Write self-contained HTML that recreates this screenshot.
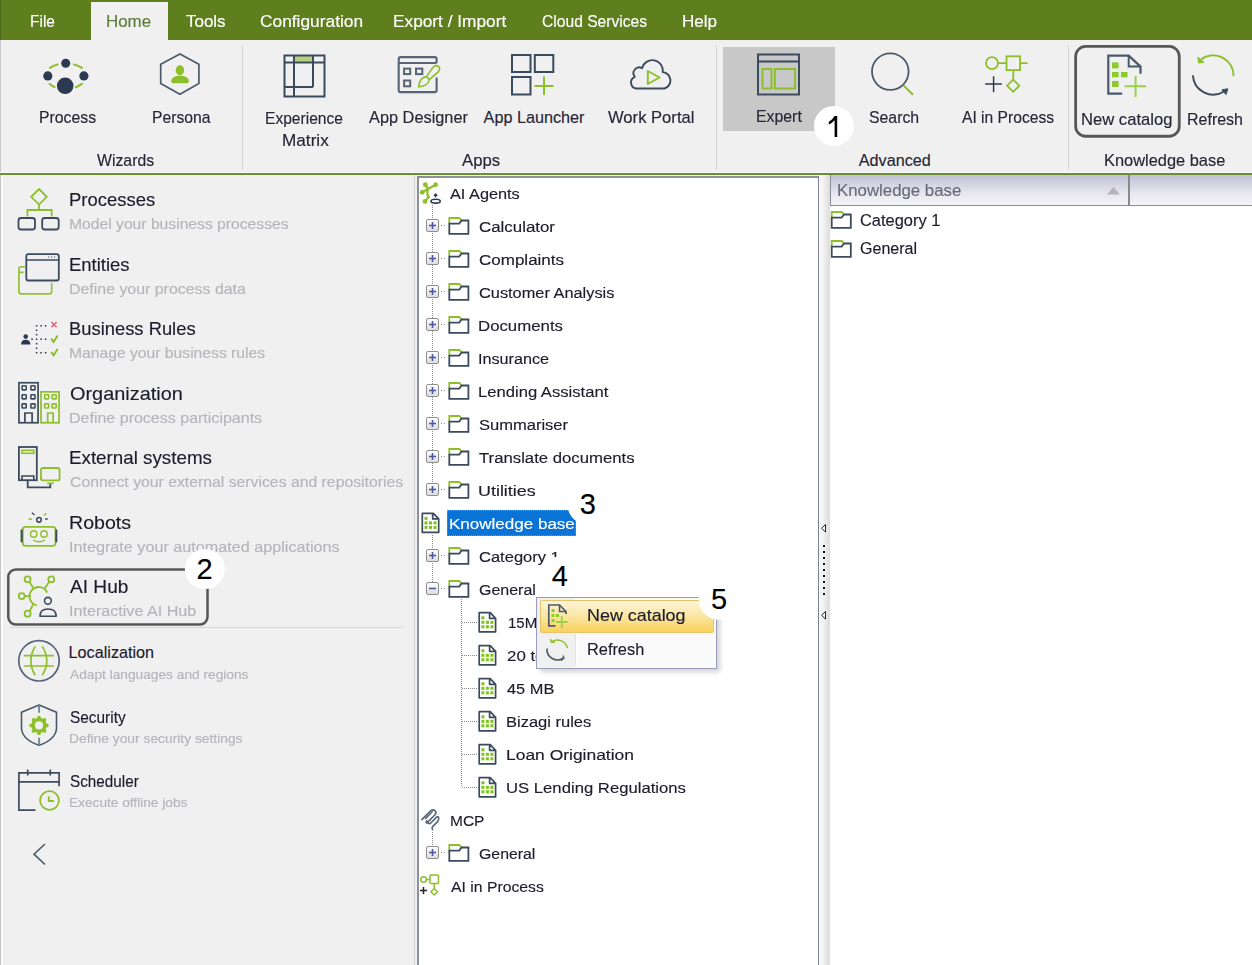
<!DOCTYPE html>
<html><head><meta charset="utf-8"><style>
*{margin:0;padding:0;box-sizing:border-box}
html,body{width:1252px;height:965px;overflow:hidden;background:#f0f0f0;font-family:'Liberation Sans',sans-serif}
.a{position:absolute}
.t{position:absolute;white-space:pre;transform-origin:0 0;-webkit-text-stroke:0.15px currentColor}
svg{position:absolute;left:0;top:0}
</style></head><body>

<div class="a" style="left:0;top:0;width:1252px;height:40px;background:#5f7f1f"></div>
<div class="a" style="left:0;top:0;width:1px;height:40px;background:#4a6a18"></div>
<div class="a" style="left:91px;top:2px;width:77px;height:38px;background:#f0f0f0"></div>
<div class="a" style="left:0;top:40px;width:1px;height:135px;background:#c8c8c8"></div>
<div class="a" style="left:242px;top:45px;width:1px;height:125px;background:#d4d4d4"></div>
<div class="a" style="left:716px;top:45px;width:1px;height:125px;background:#d4d4d4"></div>
<div class="a" style="left:1068px;top:45px;width:1px;height:125px;background:#d4d4d4"></div>
<div class="a" style="left:0;top:172px;width:1252px;height:1px;background:#fafafa"></div>
<div class="a" style="left:0;top:173px;width:1252px;height:2px;background:#6a8f2e"></div>
<!-- left panel -->
<div class="a" style="left:0;top:175px;width:1px;height:790px;background:#c4c4c4"></div>
<div class="a" style="left:1px;top:175px;width:2px;height:790px;background:#fcfcfc"></div>
<div class="a" style="left:414px;top:175px;width:1px;height:790px;background:#d2d2d2"></div>
<div class="a" style="left:415px;top:175px;width:2px;height:790px;background:#eef0f2"></div>
<!-- tree panel -->
<div class="a" style="left:417px;top:176px;width:402px;height:789px;background:#fff;border-left:2px solid #8c909a;border-top:2px solid #8c909a;border-right:1px solid #7c8298"></div>
<!-- splitter -->
<div class="a" style="left:819px;top:175px;width:11px;height:790px;background:linear-gradient(to right,#fafafa,#f2f2f2 40%,#dcdcdc)"></div>
<!-- right panel -->
<div class="a" style="left:830px;top:175px;width:422px;height:790px;background:#fff"></div>
<div class="a" style="left:830px;top:175px;width:422px;height:31px;background:linear-gradient(to bottom,#c0c0d6,#e6e6ee 60%,#f4f4f8);border-bottom:1px solid #8e8e8e"></div>
<div class="a" style="left:1128px;top:175px;width:2px;height:30px;background:#8a8a8a"></div>
<div class="a" style="left:830px;top:175px;width:1px;height:31px;background:#8a8e9a"></div>
<!-- expert highlight -->
<div class="a" style="left:723px;top:47px;width:112px;height:84px;background:#c8c8c8"></div>
<!-- selection -->
<div class="a" style="left:447px;top:510px;width:129px;height:26px;background:#0a74d6;border:1px dotted #e07a20"></div>


<svg width="1252" height="965" viewBox="0 0 1252 965">
<g id="process">
 <circle cx="65.7" cy="63.2" r="4.5" fill="#2b3a50"/>
 <circle cx="47.8" cy="75.9" r="4.6" fill="#2b3a50"/>
 <circle cx="83.9" cy="75.9" r="4.6" fill="#2b3a50"/>
 <circle cx="65.2" cy="85.8" r="8.3" fill="#2b3a50"/>
 <g stroke="#8dbf2b" stroke-width="2" fill="none" stroke-linecap="round">
  <path d="M49.9 67.9 Q53 65.5 57.7 64.5"/><path d="M74 64.5 Q78 65.5 82 67.9"/>
  <path d="M49.7 83.9 Q52 86 54.6 87"/><path d="M75.8 87.3 Q79 86 82 83.9"/>
 </g>
</g>
<g id="persona">
 <path d="M179.9 53.9 L198.9 64.2 L198.9 83.6 L179.9 94.3 L160.7 83.6 L160.7 64.2 Z" fill="none" stroke="#4c5a6a" stroke-width="1.7" stroke-linejoin="round"/>
 <ellipse cx="179.9" cy="70.3" rx="4.2" ry="5" fill="#8dbf2b"/>
 <path d="M171.2 81 Q171.5 76 179.9 75.5 Q188.6 76 188.9 81 Q188.9 83.3 186 83.3 L174 83.3 Q171.2 83.3 171.2 81Z" fill="#8dbf2b"/>
</g>
<g id="expmatrix" fill="none" stroke="#3b4a5c" stroke-width="2">
 <rect x="294" y="56" width="19" height="6" fill="#b5d07a" stroke="none"/>
 <rect x="284.5" y="55.5" width="40" height="41"/>
 <path d="M284.5 62.5 H324.5 M294 55.5 V96.5 M313 55.5 V87 M284.5 87 H313"/>
</g>
<g id="appdesigner" fill="none" stroke="#566474" stroke-width="2.1">
 <path d="M436.6 63 V59 Q436.6 57.1 434.7 57.1 H400.6 Q398.7 57.1 398.7 59 V90.2 Q398.7 92.1 400.6 92.1 H434.7 Q436.6 92.1 436.6 90.2 V77.5"/>
 <path d="M398.7 63 H436.6"/>
 <g stroke-width="2"><rect x="404.1" y="68.6" width="6.1" height="5.5"/><rect x="416" y="68.6" width="6.3" height="5.5"/><rect x="404.1" y="80.5" width="6.1" height="5.8"/></g>
 <path d="M433.5 66.8 Q436.5 64.5 438.8 66.8 Q440.8 69.3 438.2 71.8 L429.4 79.6 L426.4 76.6 Z M426.4 76.6 Q421 77.6 419.6 82.5 L418.6 87 L423 86 Q428 84.8 429.4 79.6" stroke="#8dbf2b" stroke-width="1.6" stroke-linejoin="round"/>
</g>
<g id="applauncher" fill="none" stroke="#3b4a5c" stroke-width="2">
 <rect x="512" y="55" width="18.5" height="17"/>
 <rect x="534.8" y="55" width="18.5" height="17"/>
 <rect x="512" y="77" width="18.5" height="17.5"/>
 <path d="M534.5 86 H553.5 M544 76.5 V95" stroke="#8dbf2b"/>
</g>
<g id="workportal" fill="none" stroke="#3e4c5e" stroke-width="1.9">
 <path d="M636.5 88.5 A6.1 6.1 0 0 1 634.8 76.8 A5.7 5.7 0 0 1 642 68.2 A10.6 10.6 0 0 1 662.8 72.1 A8.4 8.4 0 0 1 664.5 88.5 Z" stroke-linejoin="round"/>
 <path d="M647.8 71 L659.5 77.5 L647.8 84 Z" stroke="#8dbf2b" stroke-width="1.9" stroke-linejoin="round"/>
</g>
<g id="expert" fill="none" stroke="#3b4a5c" stroke-width="2">
 <rect x="758" y="54.5" width="41" height="40"/>
 <path d="M758 61.5 H799"/>
 <rect x="762.5" y="69" width="9" height="19.5" stroke="#8dbf2b"/>
 <rect x="774.8" y="69" width="20.3" height="19.5" stroke="#8dbf2b"/>
</g>
<g id="search" fill="none">
 <circle cx="890.3" cy="71.6" r="18.3" stroke="#4c5a6a" stroke-width="1.8"/>
 <path d="M903.3 85.3 L913 94.8" stroke="#8dbf2b" stroke-width="2"/>
</g>
<g id="aiproc" fill="none" stroke="#8dbf2b" stroke-width="1.8">
 <circle cx="992" cy="63.2" r="6"/>
 <path d="M998 63.2 H1006 M1020.7 63.2 H1027.7 M1013.3 70.6 V79.5"/>
 <rect x="1006.5" y="56.3" width="13.6" height="13.8"/>
 <path d="M1013.2 79.6 L1019.3 85.7 L1013.2 91.8 L1007.1 85.7Z"/>
 <path d="M985.1 84.1 H1001.8 M993.6 76.3 V92.2" stroke="#2b3a50" stroke-width="1.5"/>
</g>
<g id="newcat">
 <path d="M1122.2 93.6 H1108.3 V55.6 H1128.7 L1140.5 66.6 V73.7" fill="none" stroke="#4a5a6e" stroke-width="2.2"/>
 <path d="M1128.7 55.6 V66.6 H1140.5" fill="none" stroke="#4a5a6e" stroke-width="2"/>
 <g fill="#8ccc2a"><rect x="1112" y="62.4" width="6.6" height="6"/><rect x="1112" y="72" width="6.6" height="5.3"/><rect x="1121" y="72" width="6.5" height="5.3"/><rect x="1112" y="81" width="6.6" height="6"/></g>
 <path d="M1124.6 86.3 H1146.1 M1135.6 76.1 V97.1" stroke="#9ad04a" stroke-width="2"/>
</g>
<g id="refresh" fill="none" stroke-width="1.9">
 <path d="M1233.6 76.2 A20.3 20.3 0 0 0 1201 59.5" stroke="#8dbf2b"/>
 <path d="M1197.8 57.2 L1198.6 63 L1204 62.3 Z" fill="#8dbf2b" stroke="#8dbf2b" stroke-width="1" stroke-linejoin="round"/>
 <path d="M1192.9 75.4 A20.3 20.3 0 0 0 1224 91.5" stroke="#3e4c5e"/>
 <path d="M1222 89.8 L1227.8 88.8 L1226 94.6 Z" fill="#3e4c5e" stroke="#3e4c5e" stroke-width="1" stroke-linejoin="round"/>
</g>
<rect x="1075.65" y="46.45" width="103.6" height="89.8" rx="10" fill="none" stroke="#575757" stroke-width="2.8"/>
</svg>


<svg width="1252" height="965" viewBox="0 0 1252 965">
<g id="l-processes" fill="none" stroke-width="1.8">
 <path d="M39 189 L46.8 196.8 L39 204.6 L31.2 196.8Z M39 204.6 V210 M27.4 216.5 V210 H51.7 V216.5" stroke="#8dbf2b"/>
 <rect x="18.5" y="218" width="16.5" height="11.5" rx="2.5" stroke="#3b4a5c"/>
 <rect x="42.2" y="218" width="16.5" height="11.5" rx="2.5" stroke="#3b4a5c"/>
</g>
<g id="l-entities" fill="none" stroke-width="1.7">
 <path d="M24.8 266.8 H21 Q18.9 266.8 18.9 269 V291.6 Q18.9 293.9 21 293.9 H49.6 Q51.7 293.9 51.7 291.6 V282.9 M18.9 272.4 H23.5" stroke="#96c03a"/>
 <rect x="26.3" y="254.2" width="32.5" height="26.3" rx="2" stroke="#3b4a5c" stroke-width="1.8"/>
 <path d="M26.3 260 H58.8" stroke="#3b4a5c" stroke-width="1.5"/>
 <path d="M48 257 h1.2 M51 257 h1.2 M54 257 h1.2" stroke="#3b4a5c" stroke-width="1"/>
</g>
<g id="l-brules">
 <circle cx="25.7" cy="336.6" r="2.3" fill="#2b3a50"/><path d="M21 344.5 Q21 340 25.7 339.8 Q30.4 340 30.4 344.5Z" fill="#2b3a50"/>
 <rect x="35.85" y="325.05" width="1.5" height="1.5" fill="#2a3646"/><rect x="40.35" y="325.05" width="1.5" height="1.5" fill="#2a3646"/><rect x="44.85" y="325.05" width="1.5" height="1.5" fill="#2a3646"/><rect x="31.35" y="338.45" width="1.5" height="1.5" fill="#2a3646"/><rect x="35.85" y="338.45" width="1.5" height="1.5" fill="#2a3646"/><rect x="40.35" y="338.45" width="1.5" height="1.5" fill="#2a3646"/><rect x="44.85" y="338.45" width="1.5" height="1.5" fill="#2a3646"/><rect x="35.85" y="351.95" width="1.5" height="1.5" fill="#2a3646"/><rect x="40.35" y="351.95" width="1.5" height="1.5" fill="#2a3646"/><rect x="44.85" y="351.95" width="1.5" height="1.5" fill="#2a3646"/><rect x="35.85" y="329.55" width="1.5" height="1.5" fill="#2a3646"/><rect x="35.85" y="333.95" width="1.5" height="1.5" fill="#2a3646"/><rect x="35.85" y="342.95" width="1.5" height="1.5" fill="#2a3646"/><rect x="35.85" y="347.45" width="1.5" height="1.5" fill="#2a3646"/>
 <path d="M51.4 322 L56.6 327.2 M56.6 322 L51.4 327.2" stroke="#e86078" stroke-width="1.6"/>
 <path d="M51.2 338.6 L53.6 342 L57.6 335.6 M51.2 352 L53.6 355.4 L57.6 349" stroke="#8cb82a" stroke-width="1.9" fill="none"/>
</g>
<g id="l-org" fill="none" stroke-width="1.7">
 <rect x="18.95" y="382.75" width="19.1" height="40" stroke="#3b4a5c"/>
 <g stroke="#3b4a5c" stroke-width="1.6"><rect x="22.1" y="385.8" width="4.1" height="4.1" rx="0.6"/><rect x="22.1" y="394.8" width="4.1" height="4.1" rx="0.6"/><rect x="22.1" y="403.9" width="4.1" height="4.1" rx="0.6"/><rect x="30.9" y="385.8" width="4.1" height="4.1" rx="0.6"/><rect x="30.9" y="394.8" width="4.1" height="4.1" rx="0.6"/><rect x="30.9" y="403.9" width="4.1" height="4.1" rx="0.6"/></g>
 <path d="M24.9 422.8 V413 H32.1 V422.8" stroke="#3b4a5c"/>
 <rect x="41.05" y="391.85" width="18" height="30.9" stroke="#8dbf2b"/>
 <g stroke="#8dbf2b" stroke-width="1.6"><rect x="44.6" y="394.8" width="4.1" height="4.1" rx="0.6"/><rect x="44.6" y="403.9" width="4.1" height="4.1" rx="0.6"/><rect x="52.1" y="394.8" width="4.1" height="4.1" rx="0.6"/><rect x="52.1" y="403.9" width="4.1" height="4.1" rx="0.6"/></g>
 <path d="M47.7 422.8 V413 H53.1 V422.8" stroke="#8dbf2b"/>
</g>
<g id="l-ext" fill="none" stroke-width="1.8">
 <rect x="18.9" y="447" width="17.9" height="33.2" stroke="#3b4a5c"/>
 <rect x="22" y="450.3" width="11.8" height="3" stroke="#8dbf2b" stroke-width="1.6"/>
 <path d="M22 480.2 V476 H33.8 V480.2" stroke="#3b4a5c" stroke-width="1.6"/>
 <path d="M27.7 480.2 V487.4 H50.3 V483.3" stroke="#3b4a5c"/>
 <path d="M47.2 483.3 H53.6" stroke="#8dbf2b"/>
 <rect x="41" y="468" width="18.6" height="12.4" rx="2" stroke="#8dbf2b"/>
</g>
<g id="l-robots" fill="none" stroke-width="1.8">
 <rect x="22.8" y="526.8" width="32.7" height="19" rx="2.8" stroke="#8dbf2b"/>
 <path d="M21.6 529.4 V542.3 M56.3 529.4 V542.3" stroke="#3b4a5c" stroke-width="2"/>
 <circle cx="33.7" cy="534" r="3.2" stroke="#8dbf2b" stroke-width="1.4"/><circle cx="44" cy="534" r="3.2" stroke="#8dbf2b" stroke-width="1.4"/>
 <path d="M33.2 540 Q39 543.5 45.1 540" stroke="#8dbf2b" stroke-width="1.4"/>
 <circle cx="39" cy="519.8" r="2.3" stroke="#3b4a5c" stroke-width="1.6"/>
 <path d="M28.5 519 H32.1 M43.8 515.6 L46.4 513.3" stroke="#8dbf2b" stroke-width="1.3"/>
 <path d="M45.1 519 H47.7 M31.9 512.8 L34.5 515.1" stroke="#3b4a5c" stroke-width="1.3"/>
</g>
<g id="l-aihub" fill="none" stroke-width="1.8">
 <g stroke="#8dbf2b">
 <circle cx="27.6" cy="579.3" r="3"/><circle cx="51.3" cy="579.3" r="3"/><circle cx="21.7" cy="596.1" r="3"/><circle cx="27.6" cy="613.7" r="3"/>
 <path d="M47.2 592.7 A9.2 9.2 0 1 0 36.8 605.2"/>
 <path d="M29.5 581.8 L33 587.8 M49.3 581.8 L44.6 588.6 M24.7 596.1 H31.1 M29.6 611.3 L33.2 604.1"/>
 </g>
 <circle cx="47.9" cy="600.8" r="3.4" stroke="#3b4a5c" stroke-width="1.6"/>
 <path d="M40 616.2 Q40 609 48 609 Q56.2 609 56.2 616.2 Z" stroke="#3b4a5c" stroke-width="1.6" stroke-linejoin="round"/>
</g>
<g id="l-loc" fill="none" stroke-width="1.7">
 <circle cx="39" cy="660.8" r="20.2" stroke="#56647a"/>
 <path d="M23.8 655.7 H53.9 M23.8 666 H53.9 M35.2 646.4 Q26.5 661 35.2 675.4 M42.2 646.4 Q51.5 661 42.2 675.4" stroke="#8dbf2b"/>
</g>
<g id="l-sec" fill="none" stroke-width="1.6">
 <path d="M39.1 705 L56.5 712.2 V729 Q55 740 39.1 745.3 Q23 740 21.5 729 V712.2 Z" stroke="#4a5868" stroke-linejoin="round"/>
 <path d="M39.1 705.5 V712.7 M39.1 737.8 V745" stroke="#7a8898" stroke-width="2"/>
 <circle cx="39" cy="725.4" r="5.9" stroke="#8dbf2b" stroke-width="3.6"/>
 <g fill="#8dbf2b" stroke="none"><circle cx="39" cy="717.6" r="1.9"/><circle cx="39" cy="733.2" r="1.9"/><circle cx="31.2" cy="725.4" r="1.9"/><circle cx="46.8" cy="725.4" r="1.9"/><circle cx="33.5" cy="719.9" r="1.9"/><circle cx="44.5" cy="719.9" r="1.9"/><circle cx="33.5" cy="730.9" r="1.9"/><circle cx="44.5" cy="730.9" r="1.9"/></g>
</g>
<g id="l-sched" fill="none" stroke-width="1.7">
 <path d="M35.5 810.1 H18.9 V772.8 H59.1 V786.2 M18.9 781.8 H59.1 M27.7 769.4 V775.6 M50.3 769.4 V775.6" stroke="#3e4c5e"/>
 <circle cx="49.5" cy="800.5" r="9.4" stroke="#8dbf2b" stroke-width="1.8"/>
 <path d="M48.7 796.3 V801 H53.9" stroke="#8dbf2b" stroke-width="1.8"/>
</g>
<path d="M45 844 L34 854.2 L45 864.5" fill="none" stroke="#4c5a6a" stroke-width="1.6"/>
<rect x="8.3" y="569.5" width="199.2" height="55" rx="7.5" fill="none" stroke="#575757" stroke-width="2.5"/>
<path d="M10 627.5 H403" stroke="#d6d6d6" stroke-width="1"/>
</svg>

<svg width="1252" height="965" viewBox="0 0 1252 965">
<defs><linearGradient id="eg" x1="0" y1="0" x2="0" y2="1"><stop offset="0" stop-color="#ffffff"/><stop offset="1" stop-color="#dcdcdc"/></linearGradient></defs>
<g stroke="#8dbf2b" stroke-width="2.2" fill="none"><path d="M425.3 184.7 L428 189 L435.6 184.7 M428 189 L422.2 192.3 M428 189 Q426.5 194 428.5 197 L425 201.4"/></g>
<g fill="#8dbf2b"><circle cx="425.3" cy="184.7" r="2.4"/><circle cx="435.6" cy="184.7" r="2.4"/><circle cx="422.2" cy="192.3" r="2.4"/><circle cx="425" cy="201.4" r="2.4"/><circle cx="428.5" cy="197" r="1.6"/></g>
<path d="M435.6 193 L437.6 195.2 L435.6 197.4 L433.6 195.2Z" fill="#2b3a50"/><ellipse cx="435.6" cy="201.2" rx="4.6" ry="1.9" fill="none" stroke="#2b3a50" stroke-width="1.6"/>
<path d="M432.5 205 V490" stroke="#8a8a8a" stroke-width="1" stroke-dasharray="1 1"/>
<path d="M441 225.5 H446" stroke="#8a8a8a" stroke-width="1" stroke-dasharray="1 2"/>
<rect x="426.5" y="219.5" width="12" height="12" rx="1.5" fill="url(#eg)" stroke="#8e8e8e" stroke-width="1"/><path d="M429.0 225.5 H436.0" stroke="#4a5aa8" stroke-width="1.6"/><path d="M432.5 222.0 V229.0" stroke="#4a5aa8" stroke-width="1.6"/>
<path d="M449.29999999999995 223.6 V218.0 H459.4 L461.59999999999997 220.5" fill="none" stroke="#8dbf2b" stroke-width="1.8"/><path d="M449.29999999999995 223.6 H459.2 L461.59999999999997 220.5 H468.4 V233.8 H449.29999999999995 Z" fill="none" stroke="#3b4a5c" stroke-width="1.8" stroke-linejoin="miter"/>
<path d="M441 258.5 H446" stroke="#8a8a8a" stroke-width="1" stroke-dasharray="1 2"/>
<rect x="426.5" y="252.5" width="12" height="12" rx="1.5" fill="url(#eg)" stroke="#8e8e8e" stroke-width="1"/><path d="M429.0 258.5 H436.0" stroke="#4a5aa8" stroke-width="1.6"/><path d="M432.5 255.0 V262.0" stroke="#4a5aa8" stroke-width="1.6"/>
<path d="M449.29999999999995 256.6 V251.0 H459.4 L461.59999999999997 253.5" fill="none" stroke="#8dbf2b" stroke-width="1.8"/><path d="M449.29999999999995 256.6 H459.2 L461.59999999999997 253.5 H468.4 V266.8 H449.29999999999995 Z" fill="none" stroke="#3b4a5c" stroke-width="1.8" stroke-linejoin="miter"/>
<path d="M441 291.5 H446" stroke="#8a8a8a" stroke-width="1" stroke-dasharray="1 2"/>
<rect x="426.5" y="285.5" width="12" height="12" rx="1.5" fill="url(#eg)" stroke="#8e8e8e" stroke-width="1"/><path d="M429.0 291.5 H436.0" stroke="#4a5aa8" stroke-width="1.6"/><path d="M432.5 288.0 V295.0" stroke="#4a5aa8" stroke-width="1.6"/>
<path d="M449.29999999999995 289.6 V284.0 H459.4 L461.59999999999997 286.5" fill="none" stroke="#8dbf2b" stroke-width="1.8"/><path d="M449.29999999999995 289.6 H459.2 L461.59999999999997 286.5 H468.4 V299.8 H449.29999999999995 Z" fill="none" stroke="#3b4a5c" stroke-width="1.8" stroke-linejoin="miter"/>
<path d="M441 324.5 H446" stroke="#8a8a8a" stroke-width="1" stroke-dasharray="1 2"/>
<rect x="426.5" y="318.5" width="12" height="12" rx="1.5" fill="url(#eg)" stroke="#8e8e8e" stroke-width="1"/><path d="M429.0 324.5 H436.0" stroke="#4a5aa8" stroke-width="1.6"/><path d="M432.5 321.0 V328.0" stroke="#4a5aa8" stroke-width="1.6"/>
<path d="M449.29999999999995 322.6 V317.0 H459.4 L461.59999999999997 319.5" fill="none" stroke="#8dbf2b" stroke-width="1.8"/><path d="M449.29999999999995 322.6 H459.2 L461.59999999999997 319.5 H468.4 V332.8 H449.29999999999995 Z" fill="none" stroke="#3b4a5c" stroke-width="1.8" stroke-linejoin="miter"/>
<path d="M441 357.5 H446" stroke="#8a8a8a" stroke-width="1" stroke-dasharray="1 2"/>
<rect x="426.5" y="351.5" width="12" height="12" rx="1.5" fill="url(#eg)" stroke="#8e8e8e" stroke-width="1"/><path d="M429.0 357.5 H436.0" stroke="#4a5aa8" stroke-width="1.6"/><path d="M432.5 354.0 V361.0" stroke="#4a5aa8" stroke-width="1.6"/>
<path d="M449.29999999999995 355.6 V350.0 H459.4 L461.59999999999997 352.5" fill="none" stroke="#8dbf2b" stroke-width="1.8"/><path d="M449.29999999999995 355.6 H459.2 L461.59999999999997 352.5 H468.4 V365.8 H449.29999999999995 Z" fill="none" stroke="#3b4a5c" stroke-width="1.8" stroke-linejoin="miter"/>
<path d="M441 390.5 H446" stroke="#8a8a8a" stroke-width="1" stroke-dasharray="1 2"/>
<rect x="426.5" y="384.5" width="12" height="12" rx="1.5" fill="url(#eg)" stroke="#8e8e8e" stroke-width="1"/><path d="M429.0 390.5 H436.0" stroke="#4a5aa8" stroke-width="1.6"/><path d="M432.5 387.0 V394.0" stroke="#4a5aa8" stroke-width="1.6"/>
<path d="M449.29999999999995 388.6 V383.0 H459.4 L461.59999999999997 385.5" fill="none" stroke="#8dbf2b" stroke-width="1.8"/><path d="M449.29999999999995 388.6 H459.2 L461.59999999999997 385.5 H468.4 V398.8 H449.29999999999995 Z" fill="none" stroke="#3b4a5c" stroke-width="1.8" stroke-linejoin="miter"/>
<path d="M441 423.5 H446" stroke="#8a8a8a" stroke-width="1" stroke-dasharray="1 2"/>
<rect x="426.5" y="417.5" width="12" height="12" rx="1.5" fill="url(#eg)" stroke="#8e8e8e" stroke-width="1"/><path d="M429.0 423.5 H436.0" stroke="#4a5aa8" stroke-width="1.6"/><path d="M432.5 420.0 V427.0" stroke="#4a5aa8" stroke-width="1.6"/>
<path d="M449.29999999999995 421.6 V416.0 H459.4 L461.59999999999997 418.5" fill="none" stroke="#8dbf2b" stroke-width="1.8"/><path d="M449.29999999999995 421.6 H459.2 L461.59999999999997 418.5 H468.4 V431.8 H449.29999999999995 Z" fill="none" stroke="#3b4a5c" stroke-width="1.8" stroke-linejoin="miter"/>
<path d="M441 456.5 H446" stroke="#8a8a8a" stroke-width="1" stroke-dasharray="1 2"/>
<rect x="426.5" y="450.5" width="12" height="12" rx="1.5" fill="url(#eg)" stroke="#8e8e8e" stroke-width="1"/><path d="M429.0 456.5 H436.0" stroke="#4a5aa8" stroke-width="1.6"/><path d="M432.5 453.0 V460.0" stroke="#4a5aa8" stroke-width="1.6"/>
<path d="M449.29999999999995 454.6 V449.0 H459.4 L461.59999999999997 451.5" fill="none" stroke="#8dbf2b" stroke-width="1.8"/><path d="M449.29999999999995 454.6 H459.2 L461.59999999999997 451.5 H468.4 V464.8 H449.29999999999995 Z" fill="none" stroke="#3b4a5c" stroke-width="1.8" stroke-linejoin="miter"/>
<path d="M441 489.5 H446" stroke="#8a8a8a" stroke-width="1" stroke-dasharray="1 2"/>
<rect x="426.5" y="483.5" width="12" height="12" rx="1.5" fill="url(#eg)" stroke="#8e8e8e" stroke-width="1"/><path d="M429.0 489.5 H436.0" stroke="#4a5aa8" stroke-width="1.6"/><path d="M432.5 486.0 V493.0" stroke="#4a5aa8" stroke-width="1.6"/>
<path d="M449.29999999999995 487.6 V482.0 H459.4 L461.59999999999997 484.5" fill="none" stroke="#8dbf2b" stroke-width="1.8"/><path d="M449.29999999999995 487.6 H459.2 L461.59999999999997 484.5 H468.4 V497.8 H449.29999999999995 Z" fill="none" stroke="#3b4a5c" stroke-width="1.8" stroke-linejoin="miter"/>
<path d="M422.29999999999995 513.3 H433.29999999999995 L438.7 518.9 V532.4 H422.29999999999995 Z M432.7 513.3 V518.9 H438.7" fill="none" stroke="#3b4a5c" stroke-width="1.7" stroke-linejoin="round"/><rect x="424.5" y="516.9" width="3" height="3" fill="#7cc41a"/><rect x="424.5" y="521.4" width="3" height="3" fill="#7cc41a"/><rect x="429.0" y="521.4" width="3" height="3" fill="#7cc41a"/><rect x="433.5" y="521.4" width="3" height="3" fill="#7cc41a"/><rect x="424.5" y="525.9" width="3" height="3" fill="#7cc41a"/><rect x="429.0" y="525.9" width="3" height="3" fill="#7cc41a"/><rect x="433.5" y="525.9" width="3" height="3" fill="#7cc41a"/>
<path d="M432.5 535 V589" stroke="#8a8a8a" stroke-width="1" stroke-dasharray="1 1"/>
<path d="M441 555.5 H446" stroke="#8a8a8a" stroke-width="1" stroke-dasharray="1 2"/>
<rect x="426.5" y="549.5" width="12" height="12" rx="1.5" fill="url(#eg)" stroke="#8e8e8e" stroke-width="1"/><path d="M429.0 555.5 H436.0" stroke="#4a5aa8" stroke-width="1.6"/><path d="M432.5 552.0 V559.0" stroke="#4a5aa8" stroke-width="1.6"/>
<path d="M449.29999999999995 553.6 V548.0 H459.4 L461.59999999999997 550.5" fill="none" stroke="#8dbf2b" stroke-width="1.8"/><path d="M449.29999999999995 553.6 H459.2 L461.59999999999997 550.5 H468.4 V563.8 H449.29999999999995 Z" fill="none" stroke="#3b4a5c" stroke-width="1.8" stroke-linejoin="miter"/>
<path d="M441 588.5 H446" stroke="#8a8a8a" stroke-width="1" stroke-dasharray="1 2"/>
<rect x="426.5" y="582.5" width="12" height="12" rx="1.5" fill="url(#eg)" stroke="#8e8e8e" stroke-width="1"/><path d="M429.0 588.5 H436.0" stroke="#4a5aa8" stroke-width="1.6"/>
<path d="M449.29999999999995 586.6 V581.0 H459.4 L461.59999999999997 583.5" fill="none" stroke="#8dbf2b" stroke-width="1.8"/><path d="M449.29999999999995 586.6 H459.2 L461.59999999999997 583.5 H468.4 V596.8 H449.29999999999995 Z" fill="none" stroke="#3b4a5c" stroke-width="1.8" stroke-linejoin="miter"/>
<path d="M461.5 599 V787" stroke="#8a8a8a" stroke-width="1" stroke-dasharray="1 1"/>
<path d="M462 622.5 H477" stroke="#8a8a8a" stroke-width="1" stroke-dasharray="1 1"/>
<path d="M479.2 612.6999999999999 H490.2 L495.6 618.3 V631.8 H479.2 Z M489.6 612.6999999999999 V618.3 H495.6" fill="none" stroke="#3b4a5c" stroke-width="1.7" stroke-linejoin="round"/><rect x="481.4" y="616.3" width="3" height="3" fill="#7cc41a"/><rect x="481.4" y="620.8" width="3" height="3" fill="#7cc41a"/><rect x="485.9" y="620.8" width="3" height="3" fill="#7cc41a"/><rect x="490.4" y="620.8" width="3" height="3" fill="#7cc41a"/><rect x="481.4" y="625.3" width="3" height="3" fill="#7cc41a"/><rect x="485.9" y="625.3" width="3" height="3" fill="#7cc41a"/><rect x="490.4" y="625.3" width="3" height="3" fill="#7cc41a"/>
<path d="M462 655.5 H477" stroke="#8a8a8a" stroke-width="1" stroke-dasharray="1 1"/>
<path d="M479.2 645.6999999999999 H490.2 L495.6 651.3 V664.8 H479.2 Z M489.6 645.6999999999999 V651.3 H495.6" fill="none" stroke="#3b4a5c" stroke-width="1.7" stroke-linejoin="round"/><rect x="481.4" y="649.3" width="3" height="3" fill="#7cc41a"/><rect x="481.4" y="653.8" width="3" height="3" fill="#7cc41a"/><rect x="485.9" y="653.8" width="3" height="3" fill="#7cc41a"/><rect x="490.4" y="653.8" width="3" height="3" fill="#7cc41a"/><rect x="481.4" y="658.3" width="3" height="3" fill="#7cc41a"/><rect x="485.9" y="658.3" width="3" height="3" fill="#7cc41a"/><rect x="490.4" y="658.3" width="3" height="3" fill="#7cc41a"/>
<path d="M462 688.5 H477" stroke="#8a8a8a" stroke-width="1" stroke-dasharray="1 1"/>
<path d="M479.2 678.6999999999999 H490.2 L495.6 684.3 V697.8 H479.2 Z M489.6 678.6999999999999 V684.3 H495.6" fill="none" stroke="#3b4a5c" stroke-width="1.7" stroke-linejoin="round"/><rect x="481.4" y="682.3" width="3" height="3" fill="#7cc41a"/><rect x="481.4" y="686.8" width="3" height="3" fill="#7cc41a"/><rect x="485.9" y="686.8" width="3" height="3" fill="#7cc41a"/><rect x="490.4" y="686.8" width="3" height="3" fill="#7cc41a"/><rect x="481.4" y="691.3" width="3" height="3" fill="#7cc41a"/><rect x="485.9" y="691.3" width="3" height="3" fill="#7cc41a"/><rect x="490.4" y="691.3" width="3" height="3" fill="#7cc41a"/>
<path d="M462 721.5 H477" stroke="#8a8a8a" stroke-width="1" stroke-dasharray="1 1"/>
<path d="M479.2 711.6999999999999 H490.2 L495.6 717.3 V730.8 H479.2 Z M489.6 711.6999999999999 V717.3 H495.6" fill="none" stroke="#3b4a5c" stroke-width="1.7" stroke-linejoin="round"/><rect x="481.4" y="715.3" width="3" height="3" fill="#7cc41a"/><rect x="481.4" y="719.8" width="3" height="3" fill="#7cc41a"/><rect x="485.9" y="719.8" width="3" height="3" fill="#7cc41a"/><rect x="490.4" y="719.8" width="3" height="3" fill="#7cc41a"/><rect x="481.4" y="724.3" width="3" height="3" fill="#7cc41a"/><rect x="485.9" y="724.3" width="3" height="3" fill="#7cc41a"/><rect x="490.4" y="724.3" width="3" height="3" fill="#7cc41a"/>
<path d="M462 754.5 H477" stroke="#8a8a8a" stroke-width="1" stroke-dasharray="1 1"/>
<path d="M479.2 744.6999999999999 H490.2 L495.6 750.3 V763.8 H479.2 Z M489.6 744.6999999999999 V750.3 H495.6" fill="none" stroke="#3b4a5c" stroke-width="1.7" stroke-linejoin="round"/><rect x="481.4" y="748.3" width="3" height="3" fill="#7cc41a"/><rect x="481.4" y="752.8" width="3" height="3" fill="#7cc41a"/><rect x="485.9" y="752.8" width="3" height="3" fill="#7cc41a"/><rect x="490.4" y="752.8" width="3" height="3" fill="#7cc41a"/><rect x="481.4" y="757.3" width="3" height="3" fill="#7cc41a"/><rect x="485.9" y="757.3" width="3" height="3" fill="#7cc41a"/><rect x="490.4" y="757.3" width="3" height="3" fill="#7cc41a"/>
<path d="M462 787.5 H477" stroke="#8a8a8a" stroke-width="1" stroke-dasharray="1 1"/>
<path d="M479.2 777.6999999999999 H490.2 L495.6 783.3 V796.8 H479.2 Z M489.6 777.6999999999999 V783.3 H495.6" fill="none" stroke="#3b4a5c" stroke-width="1.7" stroke-linejoin="round"/><rect x="481.4" y="781.3" width="3" height="3" fill="#7cc41a"/><rect x="481.4" y="785.8" width="3" height="3" fill="#7cc41a"/><rect x="485.9" y="785.8" width="3" height="3" fill="#7cc41a"/><rect x="490.4" y="785.8" width="3" height="3" fill="#7cc41a"/><rect x="481.4" y="790.3" width="3" height="3" fill="#7cc41a"/><rect x="485.9" y="790.3" width="3" height="3" fill="#7cc41a"/><rect x="490.4" y="790.3" width="3" height="3" fill="#7cc41a"/>
<g fill="none" stroke="#56647a" stroke-width="1.6" stroke-linecap="round" stroke-linejoin="round"><path d="M421.8 819.6 L430.6 810.8 Q433 808.8 435.2 810.8 Q436.8 812.8 434.8 815 L427.5 822.4 Q425.6 824.2 426.6 820.8"/><path d="M427.5 822.4 Q429 824.6 431 822.8 L436.4 817.4 Q438.6 815.4 438.8 818.4 Q438.8 820.6 436.6 822.6 L432.6 826.6 Q431.4 828 432.6 829.6"/><path d="M425.6 818.4 L432.2 811.8"/></g>
<path d="M432.5 832 V846" stroke="#8a8a8a" stroke-width="1" stroke-dasharray="1 1"/>
<path d="M441 852.5 H446" stroke="#8a8a8a" stroke-width="1" stroke-dasharray="1 2"/>
<rect x="426.5" y="846.5" width="12" height="12" rx="1.5" fill="url(#eg)" stroke="#8e8e8e" stroke-width="1"/><path d="M429.0 852.5 H436.0" stroke="#4a5aa8" stroke-width="1.6"/><path d="M432.5 849.0 V856.0" stroke="#4a5aa8" stroke-width="1.6"/>
<path d="M449.29999999999995 850.6 V845.0 H459.4 L461.59999999999997 847.5" fill="none" stroke="#8dbf2b" stroke-width="1.8"/><path d="M449.29999999999995 850.6 H459.2 L461.59999999999997 847.5 H468.4 V860.8 H449.29999999999995 Z" fill="none" stroke="#3b4a5c" stroke-width="1.8" stroke-linejoin="miter"/>
<g fill="none" stroke="#8dbf2b" stroke-width="1.5"><circle cx="423.5" cy="879.5" r="2.8"/><path d="M426.3 879.5 H430"/><rect x="430" y="875" width="8.5" height="8.5" rx="1"/><path d="M434.2 883.5 V888.5 M434.2 888.5 L437.5 891.8 L434.2 895 L431 891.8Z"/></g>
<path d="M420 890.5 H427 M423.5 887 V894" stroke="#222" stroke-width="1.5"/>
<path d="M831.6999999999999 217.6 V212 H841.8 L844.0 214.5" fill="none" stroke="#8dbf2b" stroke-width="1.8"/><path d="M831.6999999999999 217.6 H841.5999999999999 L844.0 214.5 H850.8 V227.8 H831.6999999999999 Z" fill="none" stroke="#3b4a5c" stroke-width="1.8" stroke-linejoin="miter"/>
<path d="M831.6999999999999 246.6 V241 H841.8 L844.0 243.5" fill="none" stroke="#8dbf2b" stroke-width="1.8"/><path d="M831.6999999999999 246.6 H841.5999999999999 L844.0 243.5 H850.8 V256.8 H831.6999999999999 Z" fill="none" stroke="#3b4a5c" stroke-width="1.8" stroke-linejoin="miter"/>
<path d="M1107 194.5 L1113.5 187 L1120 194.5Z" fill="#b4b4b4"/>
<path d="M825.5 524.5 L821.5 528.3 L825.5 532 Z M825.5 611.5 L821.5 615.3 L825.5 619 Z" fill="#fff" stroke="#222" stroke-width="1"/>
<rect x="823" y="545" width="2" height="2" fill="#111"/>
<rect x="823" y="551" width="2" height="2" fill="#111"/>
<rect x="823" y="557" width="2" height="2" fill="#111"/>
<rect x="823" y="563" width="2" height="2" fill="#111"/>
<rect x="823" y="569" width="2" height="2" fill="#111"/>
<rect x="823" y="575" width="2" height="2" fill="#111"/>
<rect x="823" y="581" width="2" height="2" fill="#111"/>
<rect x="823" y="587" width="2" height="2" fill="#111"/>
<rect x="823" y="593" width="2" height="2" fill="#111"/>
</svg>
<div class="t" style="left:30.04px;top:12.78px;font-size:16.2px;line-height:16.2px;color:#ffffff;transform:scaleX(0.9569);">File</div><div class="t" style="left:105.96px;top:12.78px;font-size:16.2px;line-height:16.2px;color:#5c7c38;transform:scaleX(1.0432);">Home</div><div class="t" style="left:186.00px;top:12.78px;font-size:16.2px;line-height:16.2px;color:#ffffff;transform:scaleX(1.0479);">Tools</div><div class="t" style="left:260.00px;top:12.78px;font-size:16.2px;line-height:16.2px;color:#ffffff;transform:scaleX(1.0705);">Configuration</div><div class="t" style="left:393.43px;top:12.78px;font-size:16.2px;line-height:16.2px;color:#ffffff;transform:scaleX(1.0667);">Export / Import</div><div class="t" style="left:542.00px;top:12.78px;font-size:16.2px;line-height:16.2px;color:#ffffff;transform:scaleX(0.9654);">Cloud Services</div><div class="t" style="left:681.95px;top:12.78px;font-size:16.2px;line-height:16.2px;color:#ffffff;transform:scaleX(1.0530);">Help</div><div class="t" style="left:38.72px;top:108.58px;font-size:16.2px;line-height:16.2px;color:#262636;transform:scaleX(0.9759);">Process</div><div class="t" style="left:151.73px;top:108.58px;font-size:16.2px;line-height:16.2px;color:#262636;transform:scaleX(0.9715);">Persona</div><div class="t" style="left:265.04px;top:110.28px;font-size:16.2px;line-height:16.2px;color:#262636;transform:scaleX(0.9627);">Experience</div><div class="t" style="left:281.94px;top:132.28px;font-size:16.2px;line-height:16.2px;color:#262636;transform:scaleX(1.0612);">Matrix</div><div class="t" style="left:369.40px;top:108.58px;font-size:16.2px;line-height:16.2px;color:#262636;transform:scaleX(1.0092);">App Designer</div><div class="t" style="left:483.60px;top:108.58px;font-size:16.2px;line-height:16.2px;color:#262636;">App Launcher</div><div class="t" style="left:607.80px;top:108.58px;font-size:16.2px;line-height:16.2px;color:#262636;transform:scaleX(1.0256);">Work Portal</div><div class="t" style="left:755.72px;top:108.28px;font-size:16.2px;line-height:16.2px;color:#262636;transform:scaleX(0.9787);">Expert</div><div class="t" style="left:868.80px;top:108.58px;font-size:16.2px;line-height:16.2px;color:#262636;transform:scaleX(0.9784);">Search</div><div class="t" style="left:961.60px;top:109.28px;font-size:16.2px;line-height:16.2px;color:#262636;transform:scaleX(0.9657);">AI in Process</div><div class="t" style="left:1081.27px;top:111.08px;font-size:16.2px;line-height:16.2px;color:#262636;transform:scaleX(1.0267);">New catalog</div><div class="t" style="left:1186.71px;top:111.08px;font-size:16.2px;line-height:16.2px;color:#262636;transform:scaleX(0.9876);">Refresh</div><div class="t" style="left:96.50px;top:152.08px;font-size:16.2px;line-height:16.2px;color:#262636;transform:scaleX(0.9766);">Wizards</div><div class="t" style="left:462.00px;top:152.08px;font-size:16.2px;line-height:16.2px;color:#262636;transform:scaleX(1.0325);">Apps</div><div class="t" style="left:858.80px;top:152.08px;font-size:16.2px;line-height:16.2px;color:#262636;">Advanced</div><div class="t" style="left:1103.59px;top:151.78px;font-size:16.2px;line-height:16.2px;color:#262636;transform:scaleX(1.0135);">Knowledge base</div><div class="t" style="left:68.79px;top:191.19px;font-size:18.2px;line-height:18.2px;color:#1c1c2c;transform:scaleX(1.0142);">Processes</div><div class="t" style="left:68.75px;top:216.40px;font-size:15px;line-height:15px;color:#b4b4ba;transform:scaleX(1.0450);">Model your business processes</div><div class="t" style="left:68.78px;top:255.69px;font-size:18.2px;line-height:18.2px;color:#1c1c2c;transform:scaleX(1.0163);">Entities</div><div class="t" style="left:68.74px;top:280.90px;font-size:15px;line-height:15px;color:#b4b4ba;transform:scaleX(1.0606);">Define your process data</div><div class="t" style="left:68.79px;top:320.19px;font-size:18.2px;line-height:18.2px;color:#1c1c2c;transform:scaleX(1.0100);">Business Rules</div><div class="t" style="left:68.75px;top:345.40px;font-size:15px;line-height:15px;color:#b4b4ba;transform:scaleX(1.0451);">Manage your business rules</div><div class="t" style="left:69.80px;top:384.69px;font-size:18.2px;line-height:18.2px;color:#1c1c2c;transform:scaleX(1.0940);">Organization</div><div class="t" style="left:68.73px;top:409.90px;font-size:15px;line-height:15px;color:#b4b4ba;transform:scaleX(1.0673);">Define process participants</div><div class="t" style="left:68.77px;top:449.19px;font-size:18.2px;line-height:18.2px;color:#1c1c2c;transform:scaleX(1.0322);">External systems</div><div class="t" style="left:69.80px;top:474.40px;font-size:15px;line-height:15px;color:#b4b4ba;transform:scaleX(1.0515);">Connect your external services and repositories</div><div class="t" style="left:68.72px;top:513.69px;font-size:18.2px;line-height:18.2px;color:#1c1c2c;transform:scaleX(1.0773);">Robots</div><div class="t" style="left:68.72px;top:538.90px;font-size:15px;line-height:15px;color:#b4b4ba;transform:scaleX(1.0782);">Integrate your automated applications</div><div class="t" style="left:69.80px;top:578.19px;font-size:18.2px;line-height:18.2px;color:#1c1c2c;transform:scaleX(1.0507);">AI Hub</div><div class="t" style="left:68.73px;top:603.40px;font-size:15px;line-height:15px;color:#b4b4ba;transform:scaleX(1.0748);">Interactive AI Hub</div><div class="t" style="left:68.60px;top:644.38px;font-size:16.2px;line-height:16.2px;color:#1c1c2c;">Localization</div><div class="t" style="left:69.60px;top:667.79px;font-size:13px;line-height:13px;color:#b4b4ba;transform:scaleX(1.0552);">Adapt languages and regions</div><div class="t" style="left:69.60px;top:708.88px;font-size:16.2px;line-height:16.2px;color:#1c1c2c;transform:scaleX(0.9515);">Security</div><div class="t" style="left:68.54px;top:731.59px;font-size:13px;line-height:13px;color:#b4b4ba;transform:scaleX(1.0627);">Define your security settings</div><div class="t" style="left:69.60px;top:773.18px;font-size:16.2px;line-height:16.2px;color:#1c1c2c;transform:scaleX(0.9428);">Scheduler</div><div class="t" style="left:68.55px;top:796.29px;font-size:13px;line-height:13px;color:#b4b4ba;transform:scaleX(1.0518);">Execute offline jobs</div><div class="t" style="left:450.10px;top:185.93px;font-size:15.2px;line-height:15.2px;color:#1c1c2c;transform:scaleX(1.0731);">AI Agents</div><div class="t" style="left:478.90px;top:218.93px;font-size:15.2px;line-height:15.2px;color:#1c1c2c;transform:scaleX(1.1110);">Calculator</div><div class="t" style="left:478.90px;top:251.93px;font-size:15.2px;line-height:15.2px;color:#1c1c2c;transform:scaleX(1.1195);">Complaints</div><div class="t" style="left:479.10px;top:284.93px;font-size:15.2px;line-height:15.2px;color:#1c1c2c;transform:scaleX(1.0763);">Customer Analysis</div><div class="t" style="left:477.99px;top:317.93px;font-size:15.2px;line-height:15.2px;color:#1c1c2c;transform:scaleX(1.1060);">Documents</div><div class="t" style="left:478.03px;top:350.93px;font-size:15.2px;line-height:15.2px;color:#1c1c2c;transform:scaleX(1.0651);">Insurance</div><div class="t" style="left:478.01px;top:383.93px;font-size:15.2px;line-height:15.2px;color:#1c1c2c;transform:scaleX(1.0947);">Lending Assistant</div><div class="t" style="left:479.10px;top:416.93px;font-size:15.2px;line-height:15.2px;color:#1c1c2c;transform:scaleX(1.0880);">Summariser</div><div class="t" style="left:479.10px;top:449.93px;font-size:15.2px;line-height:15.2px;color:#1c1c2c;transform:scaleX(1.1012);">Translate documents</div><div class="t" style="left:477.92px;top:482.93px;font-size:15.2px;line-height:15.2px;color:#1c1c2c;transform:scaleX(1.1789);">Utilities</div><div class="t" style="left:449.38px;top:515.93px;font-size:15.2px;line-height:15.2px;color:#ffffff;transform:scaleX(1.1204);">Knowledge base</div><div class="t" style="left:478.90px;top:548.93px;font-size:15.2px;line-height:15.2px;color:#1c1c2c;transform:scaleX(1.0874);">Category 1</div><div class="t" style="left:478.90px;top:581.93px;font-size:15.2px;line-height:15.2px;color:#1c1c2c;transform:scaleX(1.0530);">General</div><div class="t" style="left:507.51px;top:614.93px;font-size:15.2px;line-height:15.2px;color:#1c1c2c;transform:scaleX(0.9859);">15MB</div><div class="t" style="left:507.00px;top:647.93px;font-size:15.2px;line-height:15.2px;color:#1c1c2c;transform:scaleX(1.1100);">20 to</div><div class="t" style="left:506.70px;top:680.93px;font-size:15.2px;line-height:15.2px;color:#1c1c2c;transform:scaleX(1.0785);">45 MB</div><div class="t" style="left:505.61px;top:713.93px;font-size:15.2px;line-height:15.2px;color:#1c1c2c;transform:scaleX(1.0859);">Bizagi rules</div><div class="t" style="left:505.55px;top:746.93px;font-size:15.2px;line-height:15.2px;color:#1c1c2c;transform:scaleX(1.1481);">Loan Origination</div><div class="t" style="left:505.60px;top:779.93px;font-size:15.2px;line-height:15.2px;color:#1c1c2c;transform:scaleX(1.0986);">US Lending Regulations</div><div class="t" style="left:449.68px;top:812.93px;font-size:15.2px;line-height:15.2px;color:#1c1c2c;transform:scaleX(1.0209);">MCP</div><div class="t" style="left:479.30px;top:845.93px;font-size:15.2px;line-height:15.2px;color:#1c1c2c;transform:scaleX(1.0437);">General</div><div class="t" style="left:450.50px;top:878.93px;font-size:15.2px;line-height:15.2px;color:#1c1c2c;transform:scaleX(1.0370);">AI in Process</div><div class="t" style="left:836.67px;top:182.40px;font-size:16.3px;line-height:16.3px;color:#6a6a7e;transform:scaleX(1.0324);">Knowledge base</div><div class="t" style="left:859.70px;top:212.20px;font-size:16.3px;line-height:16.3px;color:#1c1c2c;transform:scaleX(1.0090);">Category 1</div><div class="t" style="left:859.70px;top:240.20px;font-size:16.3px;line-height:16.3px;color:#1c1c2c;transform:scaleX(0.9859);">General</div>

<div class="a" style="left:540px;top:601px;width:180px;height:71px;background:rgba(0,0,0,0.18);filter:blur(2.5px);border-radius:2px"></div>
<div class="a" style="left:536px;top:597px;width:181px;height:72px;background:#fafafa;border:1px solid #9c9cba"></div>
<div class="a" style="left:537px;top:598px;width:38px;height:70px;background:#f0f0f0"></div>
<div class="a" style="left:575px;top:632px;width:1px;height:34px;background:#e2e2e2"></div>
<div class="a" style="left:576px;top:632px;width:1px;height:34px;background:#ffffff"></div>
<div class="a" style="left:540px;top:600px;width:174px;height:33px;border:1px solid #e6c46a;border-radius:2px;background:linear-gradient(to bottom,#fdf4d8 0%,#fbe7a8 45%,#f8d25c 100%)"></div>
<svg width="1252" height="965" viewBox="0 0 1252 965">
 <path d="M555.5 625.8 H548.8 V605 H559.5 L566 611.5 V614" fill="none" stroke="#4a5a6e" stroke-width="1.7"/>
 <path d="M559.5 605 V611.5 H566" fill="none" stroke="#4a5a6e" stroke-width="1.5"/>
 <g fill="#8ccc2a"><rect x="551.5" y="609" width="3" height="3"/><rect x="551.5" y="614" width="3" height="3"/><rect x="556" y="614" width="3" height="3"/><rect x="551.5" y="619" width="3" height="3"/></g>
 <path d="M556 622 H567.5 M561.8 616 V628" stroke="#9ad04a" stroke-width="1.8"/>
 <path d="M552 641.5 A10.5 10.5 0 0 1 567.5 648" fill="none" stroke="#8dbf2b" stroke-width="1.6"/>
 <path d="M550.5 639 L551.5 642.5 L555 642" fill="none" stroke="#8dbf2b" stroke-width="1.4"/>
 <path d="M547 648.5 A10.5 10.5 0 0 0 563.5 658" fill="none" stroke="#4c5a6a" stroke-width="1.6"/>
 <path d="M561 660.5 L564 658 L563 655.5" fill="none" stroke="#4c5a6a" stroke-width="1.4"/>
</svg>

<div class="t" style="left:586.81px;top:607.31px;font-size:16.4px;line-height:16.4px;color:#1c1c2c;transform:scaleX(1.0923);">New catalog</div><div class="t" style="left:586.90px;top:640.71px;font-size:16.4px;line-height:16.4px;color:#1c1c2c;transform:scaleX(0.9969);">Refresh</div>
<svg width="1252" height="965" viewBox="0 0 1252 965">
<circle cx="833.9" cy="125.9" r="20" fill="#fff"/>
<circle cx="204.85" cy="569" r="20" fill="#fff"/>
<circle cx="587.5" cy="504.5" r="20" fill="#fff"/>
<circle cx="559" cy="576.6" r="20" fill="#fff"/>
<circle cx="718.8" cy="599.7" r="20" fill="#fff"/>
<path d="M834.6 116 H837.2 V137.1 H834.6 V120.2 Q832.3 122.7 828.8 124.6 V121.9 Q832.6 119.6 834.6 116 Z" fill="#000"/>
</svg>
<div class="t" style="left:196.60px;top:555.15px;font-size:29px;line-height:29px;color:#000000;">2</div><div class="t" style="left:579.80px;top:489.95px;font-size:29px;line-height:29px;color:#000000;">3</div><div class="t" style="left:551.80px;top:562.25px;font-size:29px;line-height:29px;color:#000000;">4</div><div class="t" style="left:711.00px;top:584.75px;font-size:29px;line-height:29px;color:#000000;">5</div>
</body></html>
